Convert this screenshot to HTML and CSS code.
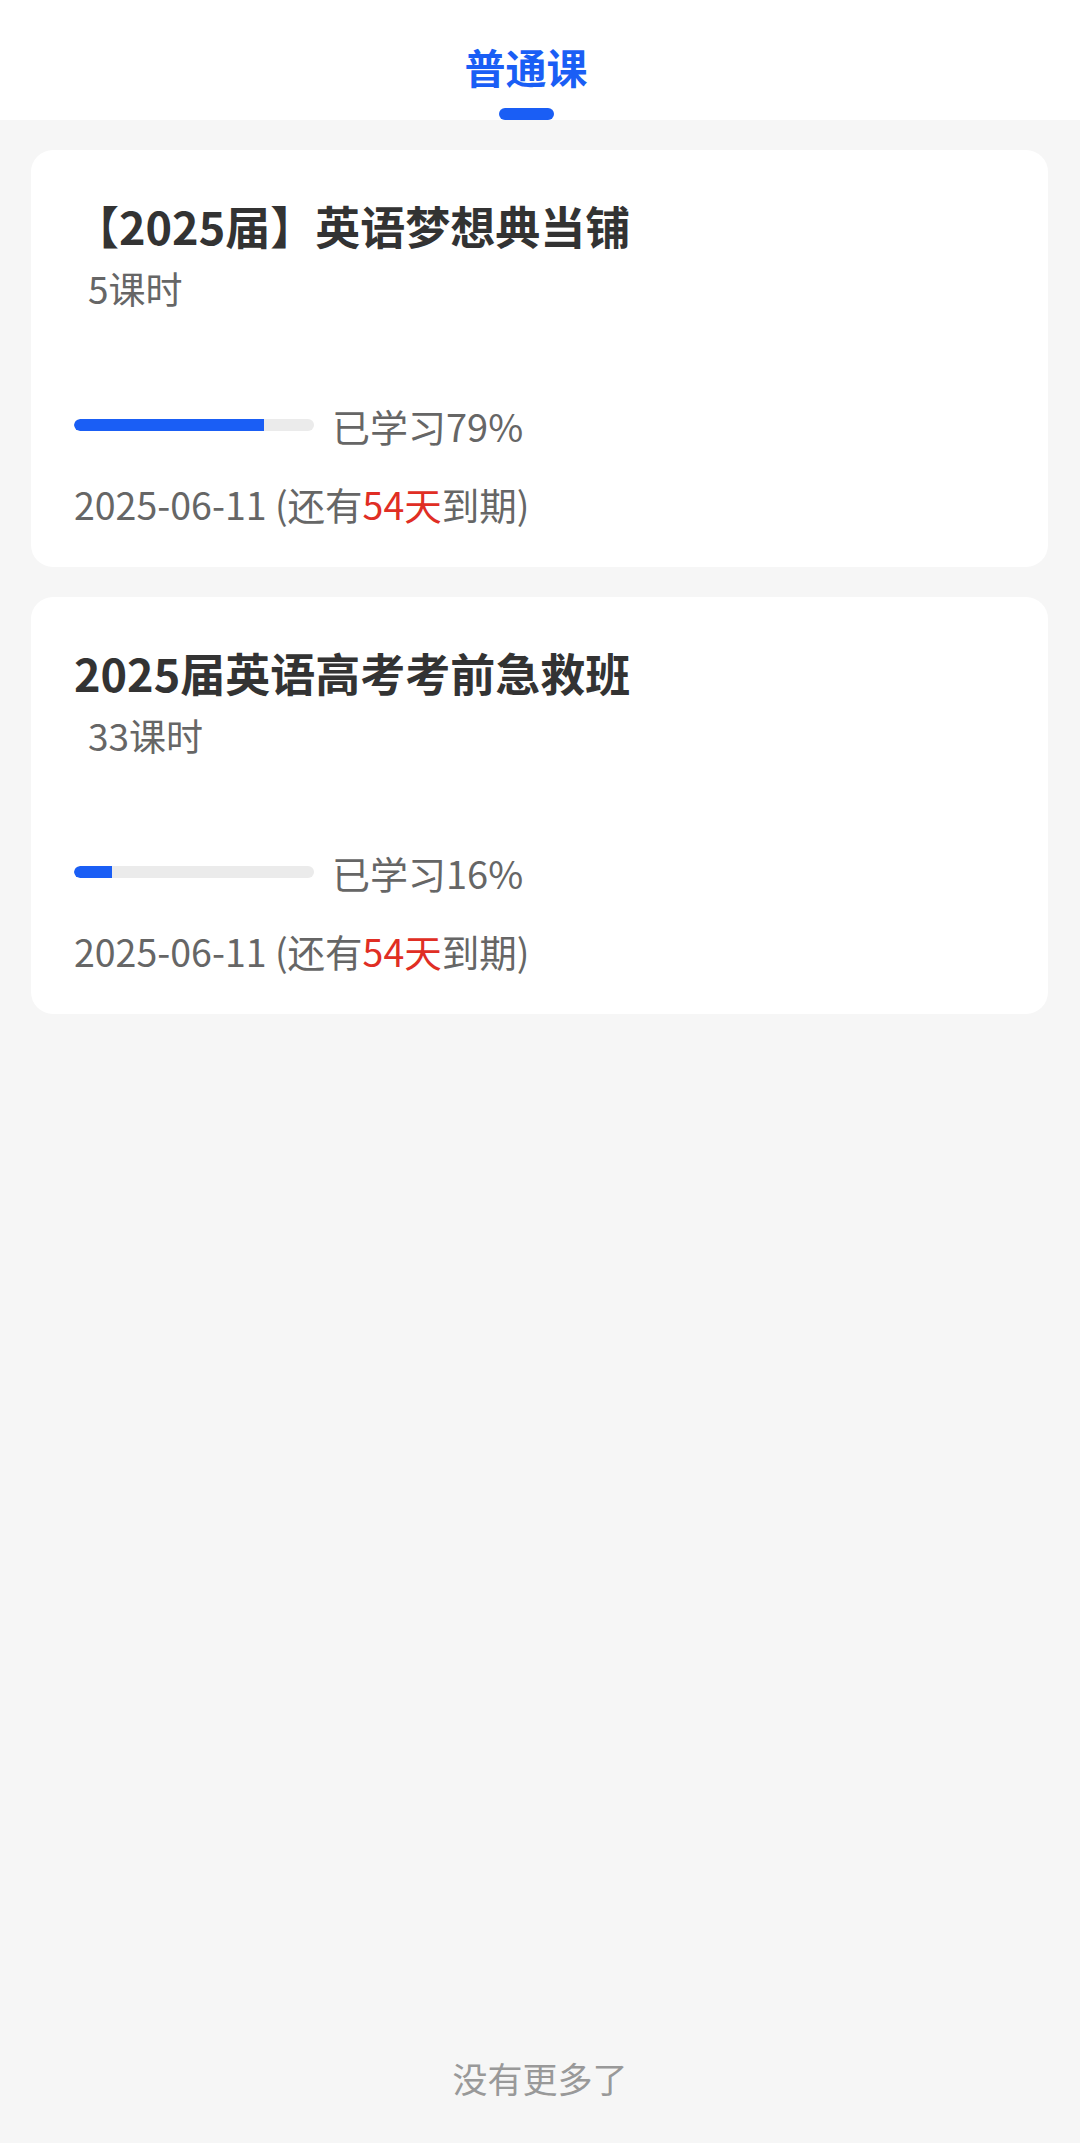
FILE: index.html
```html
<!DOCTYPE html>
<html lang="zh-CN">
<head>
    <meta charset="UTF-8">
    <meta name="viewport" content="width=device-width, initial-scale=1.0">
    <title>我的课程</title>
    <link rel="stylesheet" href="styles.css">
</head>
<body>
    <div class="page">
        <div class="tabs">
            <div class="tab active">
                <span class="tab-text">普通课</span>
                <span class="tab-line"></span>
            </div>
        </div>

        <div class="course-list">
            <div class="course-card">
                <div class="course-title">【2025届】英语梦想典当铺</div>
                <div class="course-hours">5课时</div>
                <div class="progress-row">
                    <div class="progress-bar">
                        <div class="progress-fill" style="width: 79%;"></div>
                    </div>
                    <span class="progress-text">已学习79%</span>
                </div>
                <div class="expire">2025-06-11 (还有<span class="days">54天</span>到期)</div>
            </div>

            <div class="course-card">
                <div class="course-title">2025届英语高考考前急救班</div>
                <div class="course-hours">33课时</div>
                <div class="progress-row">
                    <div class="progress-bar">
                        <div class="progress-fill" style="width: 16%;"></div>
                    </div>
                    <span class="progress-text">已学习16%</span>
                </div>
                <div class="expire">2025-06-11 (还有<span class="days">54天</span>到期)</div>
            </div>
        </div>

        <div class="no-more">没有更多了</div>
    </div>
</body>
</html>
```

FILE: styles.css
```css
body {
    margin: 0;
    padding: 0;
    background-color: #f6f6f6;
    font-family: "Noto Sans CJK SC", "Noto Sans", sans-serif;
}
.page {
    display: flex;
    flex-direction: column;
    min-height: 100vh;
}
.tabs {
    height: 120px;
    background-color: #fff;
    display: flex;
    justify-content: center;
    padding-right: 28px;
}
.tab {
    display: flex;
    flex-direction: column;
    align-items: center;
}
.tab-text {
    margin-top: 41px;
    font-size: 41px;
    line-height: 50px;
    font-weight: bold;
    color: #1a5ef5;
}
.tab-line {
    margin-top: auto;
    width: 55px;
    height: 12px;
    border-radius: 6px;
    background-color: #1a5ef5;
}
.course-list {
    display: flex;
    flex-direction: column;
    gap: 30px;
    padding: 30px 32px 0 31px;
}
.course-card {
    background-color: #fff;
    border-radius: 22px;
    padding: 46px 43px 39px;
}
.course-title {
    font-size: 45px;
    line-height: 60px;
    font-weight: bold;
    color: #333;
}
.course-hours {
    margin-top: 8px;
    padding-left: 14px;
    font-size: 37px;
    line-height: 48px;
    color: #666;
}
.progress-row {
    display: flex;
    align-items: center;
    gap: 18px;
    margin-top: 87px;
    height: 52px;
}
.progress-bar {
    width: 240px;
    height: 12px;
    border-radius: 6px;
    background-color: #ebebeb;
    overflow: hidden;
}
.progress-fill {
    height: 100%;
    border-radius: 6px 0 0 6px;
    background-color: #1a5ef5;
}
.progress-text {
    font-size: 38px;
    color: #666;
}
.expire {
    margin-top: 29px;
    font-size: 37.5px;
    line-height: 48px;
    color: #666;
}
.expire .days {
    color: #e02e24;
}
.no-more {
    margin-top: auto;
    padding-bottom: 40px;
    text-align: center;
    font-size: 35px;
    line-height: 50px;
    color: #999;
}
```
